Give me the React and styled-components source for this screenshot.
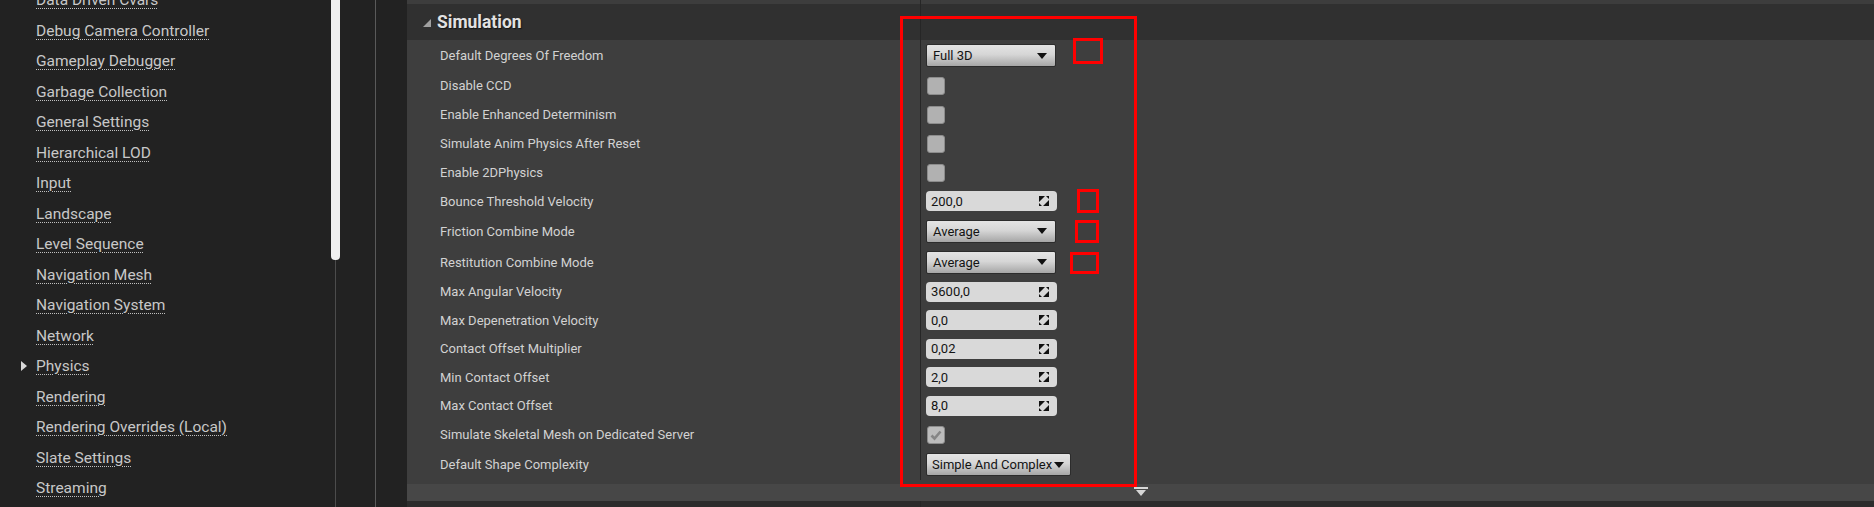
import React from 'react'
import styled, { createGlobalStyle } from 'styled-components'

const GlobalStyle = createGlobalStyle`
    html, body {
        margin: 0;
        padding: 0;
        background: #222222;
    }
    body {
        font-family: Roboto, "Liberation Sans", sans-serif;
    }
`

const Screen = styled.div`
    position: relative;
    display: flex;
    width: 1874px;
    height: 507px;
    overflow: hidden;
    background: #222222;
`

/* ---------- left settings list ---------- */

const Sidebar = styled.div`
    display: flex;
    flex-shrink: 0;
    width: 375px;
    border-right: 1px solid #5a5a5a;
`
const NavList = styled.ul`
    list-style: none;
    margin: -15px 0 0;
    padding: 0;
    width: 331px;
`
const NavItem = styled.li`
    display: flex;
    align-items: center;
    height: 30.5px;
    padding-left: ${props => (props.$open ? '21px' : '36px')};
    font-size: 15.5px;
    color: #c8c8c8;
    white-space: nowrap;
`
const NavArrow = styled.svg`
    width: 6px;
    height: 10px;
    margin-right: 9px;
    fill: #d8d8d8;
`
const NavLabel = styled.span`
    text-decoration: underline dotted #c0c0c0;
    text-decoration-thickness: 1px;
    text-underline-offset: 3px;
`
const ScrollBar = styled.div`
    display: flex;
    flex-direction: column;
    align-items: center;
    width: 9px;
`
const ScrollThumb = styled.div`
    width: 9px;
    height: 260px;
    background: #f0f0f0;
    border-radius: 0 0 4px 4px;
`
const ScrollTrack = styled.div`
    flex: 1;
    width: 1px;
    background: #4c4c4c;
`
const Gutter = styled.div`
    flex-shrink: 0;
    width: 31px;
`

/* ---------- details panel ---------- */

const Panel = styled.div`
    flex: 1;
    display: flex;
    flex-direction: column;
`
const Split = styled.div`
    display: grid;
    grid-template-columns: 513px 1fr;
    height: ${props => props.$h || 'auto'};
    background: ${props => props.$bg || 'transparent'};
`
const ValueCell = styled.div`
    display: flex;
    align-items: center;
    padding-left: 5px;
    border-left: 1px solid #262626;
`
const HeaderTitle = styled.div`
    display: flex;
    align-items: center;
    padding-left: 16px;
    font-size: 17.5px;
    font-weight: 700;
    color: #e2e2e2;
    text-shadow: 1px 1px 1px #141414;
`
const Caret = styled.svg`
    width: 8px;
    height: 8px;
    margin-right: 6px;
    margin-top: 2px;
    fill: #a0a0a0;
`
const Body = styled.div`
    background: #3e3e3e;
    padding-bottom: 4px;
`
const LabelCell = styled.div`
    display: flex;
    align-items: center;
    padding-left: 33px;
    font-size: 13px;
    color: #d2d2d2;
    white-space: nowrap;
`
const Combo = styled.div`
    display: flex;
    align-items: center;
    justify-content: space-between;
    gap: 2px;
    box-sizing: border-box;
    width: ${props => (props.$auto ? 'auto' : '130px')};
    height: 23px;
    padding: ${props => (props.$auto ? '0 6px 0 5px' : '0 8px 0 6px')};
    border: 1px solid #2c2c2c;
    border-radius: 2px;
    background: linear-gradient(#e4e4e4, #d6d6d6 45%, #a6a6a6);
    font-size: 13px;
    color: #141414;
`
const ComboArrow = styled.svg`
    width: 10px;
    height: 6px;
    fill: #111111;
`
const NumberBox = styled.div`
    display: flex;
    align-items: center;
    justify-content: space-between;
    box-sizing: border-box;
    width: 131px;
    height: 20px;
    padding: 0 8px 0 5px;
    border-radius: 4px;
    background: #d9d9d9;
    font-size: 13px;
    color: #141414;
`
const SpinIcon = styled.svg`
    width: 10px;
    height: 10px;
    fill: #111111;
`
const CheckBox = styled.div`
    display: flex;
    align-items: center;
    justify-content: center;
    box-sizing: border-box;
    width: 18px;
    height: 18px;
    margin-left: 1px;
    border: 1px solid #8c8c8c;
    border-radius: 3px;
    background: ${props => (props.$checked ? '#bcbcbc' : '#b1b1b1')};
`
const CheckMark = styled.svg`
    width: 12px;
    height: 12px;
    fill: none;
    stroke: #858585;
    stroke-width: 2.6;
`
const Band = styled.div`
    display: flex;
    justify-content: center;
    align-items: flex-start;
    height: 17px;
    padding-top: 3px;
    box-sizing: border-box;
    background: #474747;
`
const ExpandIcon = styled.svg`
    width: 14px;
    height: 10px;
    fill: #d6d6d6;
`
const Footer = styled(Split)`
    flex: 1;
    background: #2c2c2c;
`

/* ---------- red annotation marks ---------- */

const Mark = styled.div`
    position: absolute;
    left: ${props => props.$x}px;
    top: ${props => props.$y}px;
    width: ${props => props.$w}px;
    height: ${props => props.$h}px;
    box-sizing: border-box;
    border: 3px solid #ff0000;
    pointer-events: none;
`

const navItems = [
    'Data Driven Cvars',
    'Debug Camera Controller',
    'Gameplay Debugger',
    'Garbage Collection',
    'General Settings',
    'Hierarchical LOD',
    'Input',
    'Landscape',
    'Level Sequence',
    'Navigation Mesh',
    'Navigation System',
    'Network',
    'Physics',
    'Rendering',
    'Rendering Overrides (Local)',
    'Slate Settings',
    'Streaming',
]

const rows = [
    { label: 'Default Degrees Of Freedom', kind: 'combo', value: 'Full 3D' },
    { label: 'Disable CCD', kind: 'check' },
    { label: 'Enable Enhanced Determinism', kind: 'check' },
    { label: 'Simulate Anim Physics After Reset', kind: 'check' },
    { label: 'Enable 2DPhysics', kind: 'check' },
    { label: 'Bounce Threshold Velocity', kind: 'number', value: '200,0' },
    { label: 'Friction Combine Mode', kind: 'combo', value: 'Average' },
    { label: 'Restitution Combine Mode', kind: 'combo', value: 'Average' },
    { label: 'Max Angular Velocity', kind: 'number', value: '3600,0' },
    { label: 'Max Depenetration Velocity', kind: 'number', value: '0,0' },
    { label: 'Contact Offset Multiplier', kind: 'number', value: '0,02' },
    { label: 'Min Contact Offset', kind: 'number', value: '2,0' },
    { label: 'Max Contact Offset', kind: 'number', value: '8,0' },
    { label: 'Simulate Skeletal Mesh on Dedicated Server', kind: 'check', checked: true },
    { label: 'Default Shape Complexity', kind: 'combo', value: 'Simple And Complex', auto: true },
]

const rowHeight = { combo: '31px', check: '29px', number: '28.5px' }

const marks = [
    { x: 900, y: 16, w: 237, h: 471 },
    { x: 1073, y: 38, w: 30, h: 26 },
    { x: 1077, y: 189, w: 22, h: 24 },
    { x: 1075, y: 220, w: 24, h: 23 },
    { x: 1070, y: 252, w: 29, h: 22 },
]

const Value = ({ row }) => {
    if (row.kind === 'combo') {
        return (
            <Combo $auto={row.auto}>
                <span>{row.value}</span>
                <ComboArrow viewBox="0 0 10 6"><path d="M0 0H10L5 6Z" /></ComboArrow>
            </Combo>
        )
    }
    if (row.kind === 'number') {
        return (
            <NumberBox>
                <span>{row.value}</span>
                <SpinIcon viewBox="0 0 10 10">
                    <path d="M0 0H6L0 6Z M10 10H4L10 4Z M7 0H10V3Z M0 7V10H3Z" />
                </SpinIcon>
            </NumberBox>
        )
    }
    return (
        <CheckBox $checked={row.checked}>
            {row.checked && (
                <CheckMark viewBox="0 0 12 12"><path d="M1.5 6.5L4.5 9.5L10.5 2.5" /></CheckMark>
            )}
        </CheckBox>
    )
}

const App = () => (
    <Screen>
        <GlobalStyle />
        <Sidebar>
            <NavList>
                {navItems.map(name => (
                    <NavItem key={name} $open={name === 'Physics'}>
                        {name === 'Physics' && (
                            <NavArrow viewBox="0 0 6 10"><path d="M0 0L6 5L0 10Z" /></NavArrow>
                        )}
                        <NavLabel>{name}</NavLabel>
                    </NavItem>
                ))}
            </NavList>
            <ScrollBar>
                <ScrollThumb />
                <ScrollTrack />
            </ScrollBar>
        </Sidebar>
        <Gutter />
        <Panel>
            <Split $h="4px" $bg="#3d3d3d">
                <div />
                <ValueCell />
            </Split>
            <Split $h="36px" $bg="#303030">
                <HeaderTitle>
                    <Caret viewBox="0 0 8 8"><path d="M8 0V8H0Z" /></Caret>
                    Simulation
                </HeaderTitle>
                <ValueCell />
            </Split>
            <Body>
                {rows.map(row => (
                    <Split key={row.label} $h={rowHeight[row.kind]}>
                        <LabelCell>{row.label}</LabelCell>
                        <ValueCell><Value row={row} /></ValueCell>
                    </Split>
                ))}
            </Body>
            <Band>
                <ExpandIcon viewBox="0 0 14 10">
                    <path d="M0 0H14V2H0Z M2 3H12L7 9Z" />
                </ExpandIcon>
            </Band>
            <Footer>
                <div />
                <ValueCell />
            </Footer>
        </Panel>
        {marks.map((m, i) => (
            <Mark key={i} $x={m.x} $y={m.y} $w={m.w} $h={m.h} />
        ))}
    </Screen>
)

export default App
